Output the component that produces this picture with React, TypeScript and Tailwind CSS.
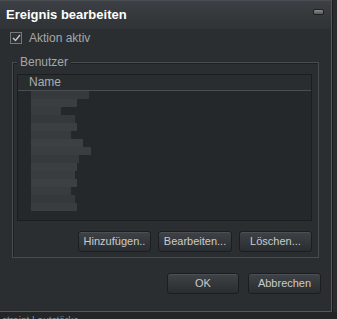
const blur: [number, string][] = [
  [58, "#363a3d"],
  [46, "#3a3e41"],
  [30, "#383c3f"],
  [44, "#35393c"],
  [46, "#3b3f42"],
  [40, "#373b3e"],
  [52, "#3c4043"],
  [60, "#3a3e41"],
  [48, "#363a3d"],
  [46, "#3b3f42"],
  [44, "#393d40"],
  [46, "#3c4043"],
  [40, "#383c3f"],
  [44, "#35393c"],
  [46, "#393d40"],
];

const Btn = ({ label, w }: { label: string; w: string }) => {
  return (
    <div
      className={`${w} h-[21px] flex items-center justify-center rounded-[3px] border border-[#1b1d1f] bg-gradient-to-b from-[#3f4246] to-[#2a2d30] shadow-[inset_0_1px_0_#4c5054] text-[11px] text-[#c9cbcd]`}
    >
      {label}
    </div>
  );
};

const App = () => {
  return (
    <div
      className="w-[337px] h-[319px] overflow-hidden bg-[#1d1f21] flex flex-col"
      style={{ fontFamily: '"Liberation Sans", Arial, sans-serif' }}
    >
      <div className="flex h-[312px] shrink-0">
        <div className="w-[332px] h-full flex flex-col bg-[#2b2e31] border-r border-b border-[#54575b]">
          {/* title bar */}
          <div className="h-[29px] flex justify-between bg-gradient-to-b from-[#3c3f43] to-[#303336] border-t border-[#4a4d51] px-[6px]">
            <span className="mt-[6px] text-[13px] font-bold text-white leading-[16px]">
              Ereignis bearbeiten
            </span>
            <div className="mt-[8px] mr-[1px] w-[11px] h-[6px] rounded-[2px] bg-gradient-to-b from-[#8a8d90] to-[#55585b] border border-[#1e2022]" />
          </div>

          {/* checkbox */}
          <div className="mt-[3px] pl-[10px] flex items-center h-[12px]">
            <div className="w-[12px] h-[12px] border border-[#74787c] bg-[#2e3134] flex items-center justify-center">
              <svg width="9" height="8" viewBox="0 0 9 8">
                <path d="M1 4 L3.5 6.5 L8 1" fill="none" stroke="#c6c8ca" strokeWidth="1.4" />
              </svg>
            </div>
            <span className="ml-[7px] text-[12px] text-[#a3a7ab]">Aktion aktiv</span>
          </div>

          {/* group box */}
          <div className="relative mt-[18px] ml-[12px] w-[307px] h-[196px] border border-[#484b4f] shadow-[inset_1px_1px_0_#1f2124] flex flex-col">
            <span className="absolute -top-[8px] left-[4px] px-[3px] bg-[#2b2e31] text-[12px] leading-[14px] text-[#a3a7ab]">
              Benutzer
            </span>
            <div className="mt-[11px] ml-[4px] w-[295px] h-[147px] bg-[#25282b] border border-[#1b1d1f] flex flex-col">
              <div className="h-[16px] shrink-0 border-b border-[#4a4d51] bg-[#2a2d30] pl-[11px] text-[12px] leading-[15px] text-[#a9adb1]">
                Name
              </div>
              <div className="pl-[13px] flex flex-col">
                {blur.map(([w, c], i) => (
                  <div key={i} className="h-[8px]" style={{ width: w, background: c }} />
                ))}
              </div>
            </div>
            <div className="mt-[10px] pr-[6px] flex justify-end gap-[7px]">
              <Btn label="Hinzufügen.." w="w-[73px]" />
              <Btn label="Bearbeiten..." w="w-[74px]" />
              <Btn label="Löschen..." w="w-[73px]" />
            </div>
          </div>

          {/* dialog buttons */}
          <div className="mt-[15px] pr-[10px] flex justify-end gap-[9px]">
            <Btn label="OK" w="w-[72px]" />
            <Btn label="Abbrechen" w="w-[73px]" />
          </div>
        </div>
        <div className="flex-1 bg-[#2a2d30] border-l border-[#1a1c1e]" />
      </div>
      <div className="flex-1 overflow-hidden bg-[#232527] pl-[2px] pt-[3px] text-[10px] leading-[12px] text-[#8a8d90]">
        straint Lautstärke
      </div>
    </div>
  );
};

export default App;
